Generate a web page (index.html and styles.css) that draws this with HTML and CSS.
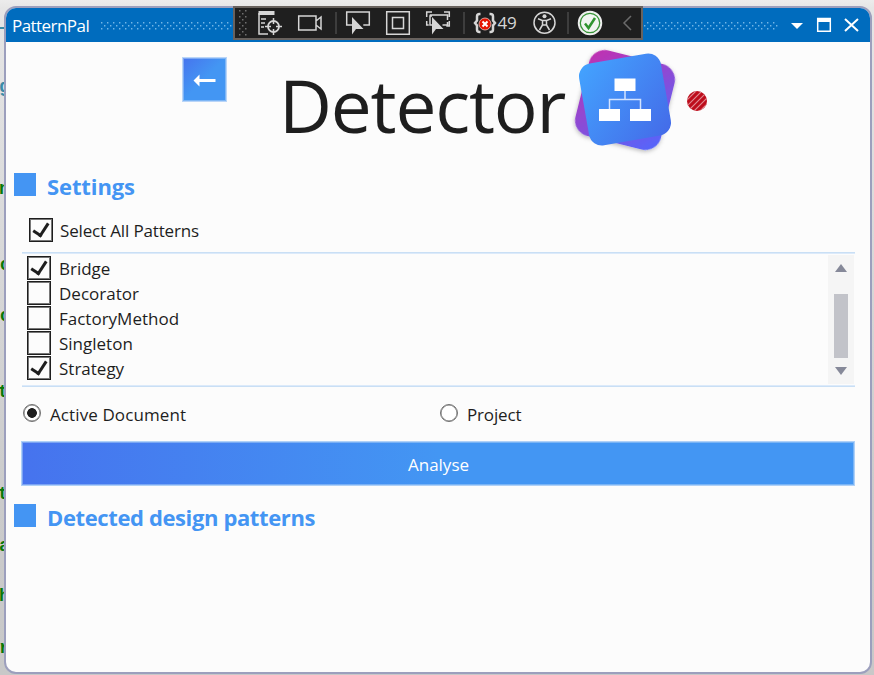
FILE: index.html
```html
<!DOCTYPE html>
<html lang="en">
<head>
<meta charset="utf-8">
<title>PatternPal</title>
<link rel="stylesheet" href="styles.css">
</head>
<body>
<div class="editor" aria-hidden="true">
  <span class="code rule" style="top:27px"></span>
  <span class="code teal" style="top:77px">g</span>
  <span class="code" style="top:179px">n</span>
  <span class="code round" style="top:255px">o</span>
  <span class="code round" style="top:306px">o</span>
  <span class="code tee" style="top:382px">t</span>
  <span class="code tee" style="top:484px">t</span>
  <span class="code" style="top:536px">a</span>
  <span class="code" style="top:586px">h</span>
  <span class="code" style="top:638px">r</span>
</div>
<main class="window">
  <header class="titlebar">
    <span class="caption">PatternPal</span>
    <svg class="grip" width="679" height="10">
      <defs><pattern id="dots" width="6" height="6" patternUnits="userSpaceOnUse"><path d="M1 1h1.4v1.4h-1.4zM4 4h1.4v1.4h-1.4z" fill="#73b5e6"/></pattern></defs>
      <rect width="679" height="9" fill="url(#dots)"/>
    </svg>
    <svg class="controls" width="74" height="20" viewBox="0 0 74 20">
      <path d="M2 8h12l-6 6z" fill="#fff"/>
      <path d="M28.7 3.5h12.6v12.8H28.7z" fill="none" stroke="#fff" stroke-width="1.5"/><path d="M28 3h14v4H28z" fill="#fff"/>
      <path d="M56 4l13 12M69 4l-13 12" stroke="#fff" stroke-width="2"/>
    </svg>
  </header>

  <section class="hero">
    <button class="back" aria-label="Back">
      <svg width="24" height="14" viewBox="0 0 24 14"><path d="M0.500 7.500l6-6v4.500h16v3h-16v4.500z" fill="#fff"/></svg>
    </button>
    <h1>Detector</h1>
    <svg class="logo" width="112" height="112" viewBox="0 0 112 112">
      <defs>
        <linearGradient id="violet" x1="0" y1="0" x2="1" y2="1"><stop offset="0" stop-color="#c42fae"/><stop offset="1" stop-color="#5068ff"/></linearGradient>
        <linearGradient id="azure" x1="0" y1="0" x2="1" y2="1"><stop offset="0" stop-color="#43a4ff"/><stop offset="1" stop-color="#446ae8"/></linearGradient>
        <filter id="shade" x="-20%" y="-20%" width="140%" height="140%"><feDropShadow dx="0" dy="1.500" stdDeviation="2" flood-opacity=".28"/></filter>
      </defs>
      <rect x="11" y="12" width="88" height="88" rx="16" fill="url(#violet)" transform="rotate(14 55 56)" filter="url(#shade)"/>
      <rect x="13.500" y="14" width="83" height="83" rx="13" fill="url(#azure)" transform="rotate(-10 55 55.500)"/>
      <path d="M55 46v10M39.500 66v-10.500h31v10.500" fill="none" stroke="#d3e3ff" stroke-width="1.500"/>
      <path d="M44.500 34.500h21v12.500h-21zM29 65h21v12h-21zM60 65h21v12h-21z" fill="#fff"/>
    </svg>
    <svg class="status" width="20" height="20" viewBox="0 0 20 20">
      <defs><clipPath id="disc"><circle cx="10" cy="10" r="10"/></clipPath></defs>
      <g clip-path="url(#disc)"><path d="M0 0h20v20H0z" fill="#bd0d1c"/><path d="M-2 11L11-2M-2 17L17-2M-1 22L22-1M5 22L22 5M11 22L22 11" stroke="#e08890" stroke-width="1.200"/></g>
    </svg>
  </section>

  <h2>Settings</h2>
  <label class="choice all"><span class="box on"></span><span>Select All Patterns</span></label>
  <section class="patterns">
    <div class="list">
      <label class="choice"><span class="box on"></span><span>Bridge</span></label>
      <label class="choice"><span class="box"></span><span>Decorator</span></label>
      <label class="choice"><span class="box"></span><span>FactoryMethod</span></label>
      <label class="choice"><span class="box"></span><span>Singleton</span></label>
      <label class="choice"><span class="box on"></span><span>Strategy</span></label>
    </div>
    <div class="scrollbar"><span class="up"></span><span class="thumb"></span><span class="down"></span></div>
  </section>
  <div class="scope">
    <label class="document"><span class="radio picked"></span>Active Document</label>
    <label><span class="radio"></span>Project</label>
  </div>
  <button class="analyse">Analyse</button>
  <h2 class="detected">Detected design patterns</h2>
</main>

<nav class="debugbar">
  <svg width="406" height="30" viewBox="235 8 406 30" fill="none" stroke="#d6d6d6" stroke-width="1.500">
    <defs><pattern id="handle" x="239" y="10" width="6" height="6" patternUnits="userSpaceOnUse"><path d="M0 0h1.500v1.500h-1.500zM3 3h1.500v1.500h-1.500z" fill="#707070" stroke="none"/></pattern></defs>
    <path d="M239 10h8v26h-8z" fill="url(#handle)" stroke="none"/>
    <path d="M258.500 11h16v4h-16z" fill="#d6d6d6" stroke="none"/>
    <path d="M259 13v21h9M261 19h5M261 23h4M261 27h3"/>
    <circle cx="273.500" cy="26.500" r="5.500" stroke-width="1.800"/><path d="M273.500 18v6M273.500 29v6M265 26.500h6M276 26.500h6"/>
    <path d="M298.700 16h17.300v14h-17.300zM316 21l5-4v12l-5-4"/>
    <path d="M336 12v22M464 12v22M568 12v22" stroke="#484848"/>
    <path d="M352 25h-5.300v-13h22.600v13h-6"/>
    <path d="M352 17v17.500l4-5.500h7.500z" fill="#d6d6d6" stroke="none"/>
    <path d="M386.700 11.700h22.600v22.600h-22.600zM392.500 17.500h11v11h-11z"/>
    <path d="M432 25h-2v-9h2M432 12h-5.300v5M426.700 21v4h2M430.500 16v-1h17v5M447.500 22v3h-5M444 12h5.300v5M449.300 21v5h-3"/>
    <path d="M432 17v17.500l4-5.500h7.500z" fill="#d6d6d6" stroke="none"/>
    <path d="M480.500 14h-1q-2.500 0-2.500 2.500v4l-2 2.500l2 2.500v4q0 2.500 2.500 2.500h1M489.500 14h1q2.500 0 2.500 2.500v4l2 2.500l-2 2.500v4q0 2.500-2.500 2.500h-1" stroke-width="2.500"/>
    <circle cx="485" cy="24" r="6" fill="#e51400" stroke="#f2c4bf" stroke-width=".8"/><path d="M482.500 21.500l5 5M487.500 21.500l-5 5" stroke="#fff" stroke-width="2"/>
    <text class="count" x="497.500" y="29">49</text>
    <circle cx="544.500" cy="22.700" r="10.500"/><circle cx="544.500" cy="16.200" r="2" fill="#d6d6d6" stroke="none"/>
    <path d="M538 18.800l4.500 1.700v4.500l-3 5M551 18.800l-4.500 1.700v4.500l3 5M542.500 20.500h4M542.500 25h4"/>
    <circle cx="590" cy="23" r="11.500" fill="#f1f5f1" stroke="#eee"/><circle cx="590" cy="23" r="9.700" stroke="#389438" stroke-width="1.300"/><path d="M585 23.500l3.500 4.500l6.500-10" stroke="#2f942f" stroke-width="2.500"/>
    <path d="M631 16l-7 7l7 7" stroke="#6b6b6b"/>
  </svg>
</nav>
</body>
</html>
```
FILE: styles.css
```css
* { box-sizing: border-box; }
body {
  margin: 0;
  width: 874px;
  height: 675px;
  overflow: hidden;
  position: relative;
  padding: 6px 2px 1px 4px;
  background: linear-gradient(#ececec 0, #e6e6e6 8px, #dedede 150px, #cbcbcb 500px, #c8c8c8);
  font: 17px/25px "Open Sans", "Noto Sans", sans-serif;
  letter-spacing: -.15px;
  color: #1e1e1e;
}
h1, h2 { margin: 0; }
button { font: inherit; letter-spacing: inherit; padding: 0; color: #fff; }

/* Sliver of the code editor behind the window */
.editor { position: absolute; inset: 0; overflow: hidden; }
.code {
  position: absolute;
  left: -1px;
  font: bold 18px/20px "Liberation Mono", monospace;
  color: #087808;
}
.round { left: 0; }
.tee { left: -2px; }
.teal { color: #3a8ca8; }
.rule { left: 0; width: 4px; height: 2px; background: #3a8ca8; }

.window {
  position: relative;
  height: 668px;
  display: flex;
  flex-direction: column;
  border: 2px solid #9c9fbd;
  border-radius: 12px;
  background: #fcfcfc;
  overflow: hidden;
}
.titlebar {
  flex: none;
  height: 34px;
  display: flex;
  align-items: center;
  padding: 0 7px 0 6px;
  background: #006cbe;
  color: #fff;
}
.caption { width: 88px; letter-spacing: -.55px; }
.grip { flex: none; margin-top: 1px; }
.controls { margin-left: auto; flex: none; }

.hero {
  height: 131px;
  flex: none;
  display: flex;
  align-items: flex-start;
  padding-left: 176px;
}
.back {
  width: 45px;
  height: 45px;
  margin-top: 15px;
  border: 1px solid #b9d5f8;
  box-shadow: inset 0 0 0 1px #b9d5f880;
  background: linear-gradient(135deg, #4674ee, #4396f3 50%);
  display: grid;
  place-items: center;
}
h1 {
  width: 287px;
  margin: 13px 0 0 52px;
  font-weight: 400;
  font-size: 73px;
  line-height: 100px;
  letter-spacing: -1.2px;
}
.logo { flex: none; margin: 2px 0 0 4px; }
.status { flex: none; margin: 49px 0 0 5px; }

h2 {
  display: flex;
  gap: 11px;
  height: 28px;
  padding-left: 8px;
  font-size: 22px;
  line-height: 26px;
  letter-spacing: -.1px;
  color: #4495f3;
}
h2::before { content: ""; width: 22px; height: 23px; background: #4495f3; }

.choice { display: flex; align-items: center; gap: 8px; height: 25px; }
.all { margin: 16px 0 10px 23px; gap: 7px; }
.choice span + span { padding-top: 2px; }
.box {
  width: 24px;
  height: 24px;
  border: 1px solid #1e1e1e;
  box-shadow: inset 0 0 0 1px #1e1e1e99;
  background: #fcfcfc;
  display: grid;
  place-items: center;
}
.on::after {
  content: "";
  width: 6.500px;
  height: 13px;
  margin: -3px 0 0 0;
  border: solid #1e1e1e;
  border-width: 0 3px 3px 0;
  transform: rotate(33deg);
}
.patterns {
  margin: 0 15px 0 16px;
  height: 135px;
  flex: none;
  display: flex;
  justify-content: space-between;
  border: solid #c9dff5;
  border-width: 1px 0;
  box-shadow: inset 0 1px #dceafa, inset 0 -1px #dceafa;
}
.list { padding: 2px 0 0 5px; letter-spacing: 0; }
.scrollbar {
  width: 26px;
  margin: 2px 1px 2px 0;
  background: #f5f5f5;
  display: flex;
  flex-direction: column;
  align-items: center;
  padding-top: 9px;
}
.up, .down { border: 6.500px solid transparent; }
.up { border-top: 0; border-bottom: 8px solid #868999; }
.down { border-bottom: 0; border-top: 8px solid #868999; margin-top: 9px; }
.thumb { width: 14px; height: 64px; margin-top: 22px; background: #c2c3c9; }

.scope {
  display: grid;
  grid-template-columns: 417px 1fr;
  margin: 15px 0 0 17px;
}
.scope label { display: flex; gap: 9px; }
.document { letter-spacing: .1px; }
.radio {
  width: 18px;
  height: 18px;
  margin-top: 2px;
  border: 1px solid #707070;
  box-shadow: inset 0 0 0 .500px #707070;
  border-radius: 50%;
  background: #fff;
}
.picked { background: radial-gradient(circle, #1e1e1e 0 4.500px, #fff 5.200px); }
.analyse {
  flex: none;
  height: 45px;
  margin: 14px 15px 18px 15px;
  padding: 1px 0 0 1px;
  letter-spacing: 0;
  border: 1px solid #b0d1f7;
  box-shadow: inset 0 0 0 1px #b0d1f780;
  background: linear-gradient(92deg, #4673ee, #4396f3 50%);
}
.detected { letter-spacing: -.38px; }

.debugbar {
  position: absolute;
  left: 233px;
  top: 6px;
  width: 410px;
  height: 34px;
  border: 2px solid #68625e;
  background: #1f1f1f;
}
.debugbar svg { display: block; }
.count { font: 17px "Open Sans", sans-serif; fill: #d6d6d6; stroke: none; }
```
